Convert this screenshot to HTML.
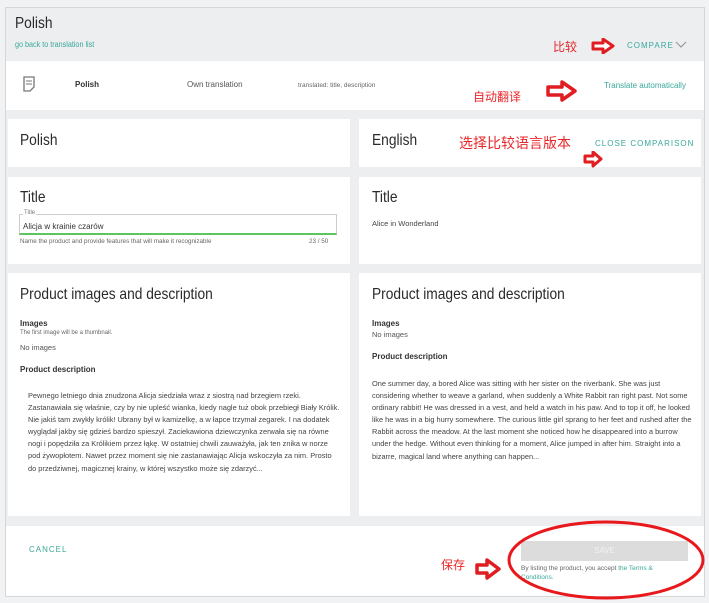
<!DOCTYPE html>
<html><head><meta charset="utf-8"><style>
*{margin:0;padding:0;box-sizing:border-box}
body{width:709px;height:603px;background:#f1f2f3;font-family:"Liberation Sans","Noto Sans CJK SC",sans-serif;color:#333;position:relative;overflow:hidden}
.frame{position:absolute;left:5px;top:7px;width:700px;height:590px;background:#eceef0;border:1px solid #d4d6d8}
.a{position:absolute}
.card{position:absolute;background:#fff}
.h{font-size:16px;color:#2a2a2a;transform:scaleX(0.86);transform-origin:0 0;white-space:nowrap}
.teal{color:#3aa89a}
.red{color:#e8262a;font-size:12px}
.s{font-size:7.5px;color:#555}
.p{font-size:7.4px;line-height:12.1px;color:#444}
</style></head><body>
<div class="frame"></div>
<div class="a h" style="left:15px;top:15px">Polish</div>
<div class="a teal" style="left:15px;top:40px;font-size:8px;transform:scaleX(.9);transform-origin:0 0">go back to translation list</div>
<div class="a red" style="left:553px;top:38px">比较</div>
<svg class="a" style="left:591px;top:38px" width="24" height="16" viewBox="0 0 24 16"><path d="M2 5h10V1l10 7-10 7v-4H2z" fill="#fff" stroke="#e01e22" stroke-width="3" stroke-linejoin="round"/></svg>
<div class="a teal" style="left:627px;top:41px;font-size:8px;letter-spacing:1px">COMPARE</div>
<svg class="a" style="left:675px;top:41px" width="12" height="8"><path d="M1 1l5 5 5-5" fill="none" stroke="#999" stroke-width="1.2"/></svg>
<div class="card" style="left:6px;top:61px;width:698px;height:49px"></div>
<svg class="a" style="left:23px;top:76px" width="12" height="16"><path d="M1 1h10v10l-4 4H1z" fill="none" stroke="#777" stroke-width="1.3"/><path d="M3 5h6M3 8h6" stroke="#777"/></svg>
<div class="a" style="left:75px;top:80px;font-size:8px;font-weight:bold;color:#333">Polish</div>
<div class="a" style="left:187px;top:80px;font-size:8px;color:#555">Own translation</div>
<div class="a" style="left:298px;top:82px;font-size:6.5px;color:#666">translated: title, description</div>
<div class="a red" style="left:473px;top:88px">自动翻译</div>
<svg class="a" style="left:546px;top:80px" width="32" height="22" viewBox="0 0 32 22"><path d="M2 7h14V2l13 9-13 9v-5H2z" fill="#fff" stroke="#e01e22" stroke-width="3.5" stroke-linejoin="round"/></svg>
<div class="a teal" style="left:604px;top:81px;font-size:8px">Translate automatically</div>
<div class="card" style="left:8px;top:119px;width:342px;height:48px"></div>
<div class="card" style="left:359px;top:119px;width:342px;height:48px"></div>
<div class="a h" style="left:20px;top:132px">Polish</div>
<div class="a h" style="left:372px;top:132px">English</div>
<div class="a red" style="left:459px;top:133px;font-size:14px">选择比较语言版本</div>
<div class="a teal" style="left:595px;top:139px;font-size:8px;letter-spacing:1px">CLOSE COMPARISON</div>
<svg class="a" style="left:583px;top:151px" width="20" height="17" viewBox="0 0 20 17"><path d="M2 5h8V1l8 7-8 7v-4H2z" fill="#fff" stroke="#e01e22" stroke-width="3" stroke-linejoin="round"/></svg>
<div class="card" style="left:8px;top:177px;width:342px;height:87px"></div>
<div class="card" style="left:359px;top:177px;width:342px;height:87px"></div>
<div class="a h" style="left:20px;top:189px">Title</div>
<div class="a h" style="left:372px;top:189px">Title</div>
<div class="a" style="left:19px;top:214px;width:318px;height:21px;border:1px solid #ccc;border-bottom:2px solid #5ec45e"></div>
<div class="a" style="left:23px;top:210px;font-size:6px;color:#777;background:#fff;padding:0 1px">Title</div>
<div class="a" style="left:23px;top:222px;font-size:8px;color:#333">Alicja w krainie czarów</div>
<div class="a" style="left:20px;top:238px;font-size:6.3px;color:#666">Name the product and provide features that will make it recognizable</div>
<div class="a" style="left:309px;top:238px;font-size:6.3px;color:#666">23 / 50</div>
<div class="a" style="left:372px;top:219px;font-size:7.5px;color:#444">Alice in Wonderland</div>
<div class="card" style="left:8px;top:273px;width:342px;height:243px"></div>
<div class="card" style="left:359px;top:273px;width:342px;height:243px"></div>
<div class="a h" style="left:20px;top:286px">Product images and description</div>
<div class="a h" style="left:372px;top:286px">Product images and description</div>
<div class="a" style="left:20px;top:319px;font-size:8px;font-weight:bold">Images</div>
<div class="a" style="left:20px;top:330px;font-size:6px;color:#666">The first image will be a thumbnail.</div>
<div class="a s" style="left:20px;top:343px">No images</div>
<div class="a" style="left:20px;top:365px;font-size:8px;font-weight:bold">Product description</div>
<div class="a" style="left:372px;top:319px;font-size:8px;font-weight:bold">Images</div>
<div class="a s" style="left:372px;top:330px">No images</div>
<div class="a" style="left:372px;top:352px;font-size:8px;font-weight:bold">Product description</div>
<div class="a p" style="left:28px;top:390px;width:312px">Pewnego letniego dnia znudzona Alicja siedziała wraz z siostrą nad brzegiem rzeki. Zastanawiała się właśnie, czy by nie upleść wianka, kiedy nagle tuż obok przebiegł Biały Królik. Nie jakiś tam zwykły królik! Ubrany był w kamizelkę, a w łapce trzymał zegarek. I na dodatek wyglądał jakby się gdzieś bardzo spieszył. Zaciekawiona dziewczynka zerwała się na równe nogi i popędziła za Królikiem przez łąkę. W ostatniej chwili zauważyła, jak ten znika w norze pod żywopłotem. Nawet przez moment się nie zastanawiając Alicja wskoczyła za nim. Prosto do przedziwnej, magicznej krainy, w której wszystko może się zdarzyć...</div>
<div class="a p" style="left:372px;top:378px;width:320px">One summer day, a bored Alice was sitting with her sister on the riverbank. She was just considering whether to weave a garland, when suddenly a White Rabbit ran right past. Not some ordinary rabbit! He was dressed in a vest, and held a watch in his paw. And to top it off, he looked like he was in a big hurry somewhere. The curious little girl sprang to her feet and rushed after the Rabbit across the meadow. At the last moment she noticed how he disappeared into a burrow under the hedge. Without even thinking for a moment, Alice jumped in after him. Straight into a bizarre, magical land where anything can happen...</div>
<div class="card" style="left:6px;top:526px;width:698px;height:70px"></div>
<div class="a teal" style="left:29px;top:545px;font-size:8px;letter-spacing:1px">CANCEL</div>
<div class="a" style="left:521px;top:541px;width:167px;height:20px;background:#dcdcdc;color:#f2f2f2;font-size:8px;text-align:center;line-height:20px">SAVE</div>
<div class="a" style="left:521px;top:564px;font-size:6.5px;color:#666;width:165px;line-height:9px">By listing the product, you accept <span class="teal">the Terms &amp; Conditions.</span></div>
<div class="a red" style="left:441px;top:556px">保存</div>
<svg class="a" style="left:475px;top:558px" width="26" height="22" viewBox="0 0 26 22"><path d="M2 7h10V2l12 9-12 9v-5H2z" fill="#fff" stroke="#e01e22" stroke-width="3.5" stroke-linejoin="round"/></svg>
<svg class="a" style="left:505px;top:518px" width="204" height="85"><ellipse cx="101" cy="42" rx="97" ry="38" fill="none" stroke="#e8181c" stroke-width="3"/></svg>
</body></html>
